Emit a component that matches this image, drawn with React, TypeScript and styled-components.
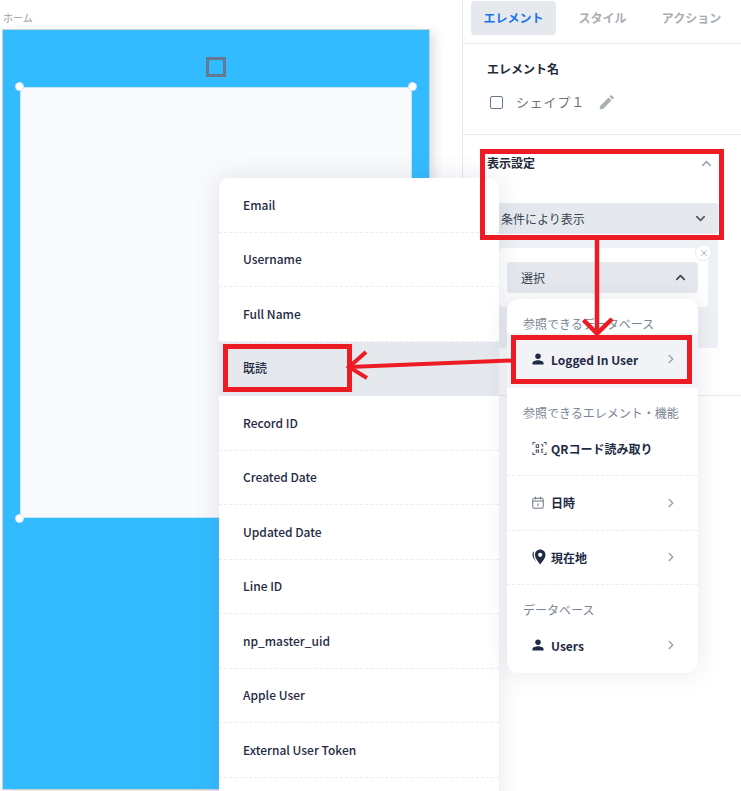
import * as React from "react";
import styled, { createGlobalStyle } from "styled-components";
import { ChevronDown, ChevronRight, ChevronUp, X } from "lucide-react";

const GlobalStyle = createGlobalStyle`
  *, *::before, *::after {
    box-sizing: border-box;
  }
  html, body {
    margin: 0;
    padding: 0;
    background: #fff;
  }
  body {
    font-family: "Noto Sans CJK JP", "Noto Sans", sans-serif;
    color: #1f2a44;
  }
`;

const fieldNames = [
  "Email",
  "Username",
  "Full Name",
  "既読",
  "Record ID",
  "Created Date",
  "Updated Date",
  "Line ID",
  "np_master_uid",
  "Apple User",
  "External User Token",
  "",
];

const UserIcon = () => (
  <svg width="12" height="12" viewBox="0 0 14 14" fill="#1f2a44">
    <circle cx="7" cy="3.8" r="3.2" />
    <path d="M0.500 13.500v-1.900C0.500 9.600 4.400 8.400 7 8.400s6.500 1.200 6.500 3.200v1.900z" />
  </svg>
);

const QrIcon = () => (
  <svg width="15" height="15" viewBox="0 0 16 16" fill="none" stroke="#4b5563" strokeWidth="1.1">
    <path d="M1 4V1.500h2.500M12.500 1.500H15V4M15 12v2.500h-2.500M3.500 14.500H1V12" />
    <path d="M4.500 4h2.500v3H4.500zM9.500 4h2v2M11.500 8v1M4.500 9.500h2.500v2.500H4.500zM9.500 9h1v3h1.500" />
  </svg>
);

const CalendarIcon = () => (
  <svg width="12" height="13" viewBox="0 0 12 13" fill="none" stroke="#6b7280" strokeWidth="1">
    <rect x="0.800" y="2.300" width="10.400" height="9.900" rx="0.800" />
    <path d="M0.800 5h10.400M3.500 0.800v2.500M8.500 0.800v2.500M6 7.500v2.700" />
  </svg>
);

const PinIcon = () => (
  <svg width="14" height="16" viewBox="0 0 14 16" fill="#1f2a44">
    <path
      fillRule="evenodd"
      d="M8.200 0.500c2.900 0 5.300 2.300 5.300 5.200 0 3.400-3.600 7.400-5.300 9.800-1.700-2.400-5.200-6.400-5.200-9.800 0-2.900 2.300-5.200 5.200-5.200zM8.200 3.700a2.100 2.100 0 1 0 0 4.200 2.100 2.100 0 0 0 0-4.200z"
    />
    <path d="M2.300 1.900C0.900 3.100 0.200 4.800 0.500 6.600c0.400 2.200 2.200 4.500 3.700 6.300-1.300-2.500-2.500-4.800-2.500-7.100 0-1.500 0.200-2.800 0.600-3.900z" />
  </svg>
);

const PencilIcon = () => (
  <svg width="15" height="15" viewBox="0 0 15 15" fill="#a9b1b8">
    <path d="M0.500 14.500l0.800-3.800 8.200-8.200 3 3-8.200 8.200z" />
    <path d="M10.400 1.600l1.100-1.100c0.400-0.400 1-0.400 1.400 0l1.600 1.600c0.400 0.400 0.400 1 0 1.400l-1.100 1.100z" />
  </svg>
);

const Annotations = () => (
  <MarkupLayer width="741" height="791" viewBox="0 0 741 791" fill="none" stroke="#ed1c24">
    <rect x="482.500" y="151.500" width="239" height="86" strokeWidth="5" />
    <path d="M597 238V332" strokeWidth="4.500" />
    <path d="M583.500 320L597 333.500L612 319" strokeWidth="4.500" />
    <rect x="513.500" y="337.500" width="176" height="44" strokeWidth="5" />
    <path d="M513 360.500L349 367" strokeWidth="4" />
    <path d="M366 352L349 367L367 378" strokeWidth="4" />
    <rect x="225.500" y="346.500" width="124" height="43" strokeWidth="5" />
  </MarkupLayer>
);

export default function App() {
  return (
    <Page>
      <GlobalStyle />
      <Canvas>
        <ScreenLabel>ホーム</ScreenLabel>
        <Phone>
          <HeaderShape />
          <Shape>
            <Handle $x="left" $y="top" />
            <Handle $x="right" $y="top" />
            <Handle $x="left" $y="bottom" />
          </Shape>
        </Phone>
      </Canvas>

      <Panel>
        <Tabs>
          <Tab $active>エレメント</Tab>
          <Tab>スタイル</Tab>
          <Tab>アクション</Tab>
        </Tabs>

        <NameSection>
          <SectionTitle>エレメント名</SectionTitle>
          <NameRow>
            <NameBox />
            <NameText>シェイプ１</NameText>
            <PencilIcon />
          </NameRow>
        </NameSection>

        <DisplaySection>
          <DisplayHeader>
            <SectionTitle>表示設定</SectionTitle>
            <ChevronUp size={15} color="#9ca3af" strokeWidth={2.5} />
          </DisplayHeader>
          <SelectBar $wide>
            <span>条件により表示</span>
            <ChevronDown size={15} color="#4b5563" strokeWidth={2.5} />
          </SelectBar>
          <ConditionWell>
            <ConditionCard>
              <CloseButton>
                <X size={10} color="#9ca3af" />
              </CloseButton>
              <SelectBar>
                <span>選択</span>
                <ChevronUp size={15} color="#374151" strokeWidth={2.5} />
              </SelectBar>
            </ConditionCard>
          </ConditionWell>
        </DisplaySection>
      </Panel>

      <FieldMenu>
        {fieldNames.map((name, index) => (
          <FieldRow key={index} $selected={name === "既読"}>
            {name}
          </FieldRow>
        ))}
      </FieldMenu>

      <SourceMenu>
        <MenuLabel>参照できるデータベース</MenuLabel>
        <SourceRow $active $latin>
          <IconSlot><UserIcon /></IconSlot>
          <SourceName>Logged In User</SourceName>
          <ChevronRight size={14} color="#9ca3af" strokeWidth={2.5} />
        </SourceRow>
        <MenuLabel>参照できるエレメント・機能</MenuLabel>
        <SourceRow $dashed>
          <IconSlot><QrIcon /></IconSlot>
          <SourceName>QRコード読み取り</SourceName>
        </SourceRow>
        <SourceRow $dashed>
          <IconSlot><CalendarIcon /></IconSlot>
          <SourceName>日時</SourceName>
          <ChevronRight size={14} color="#9ca3af" strokeWidth={2.5} />
        </SourceRow>
        <SourceRow $dashed>
          <IconSlot><PinIcon /></IconSlot>
          <SourceName>現在地</SourceName>
          <ChevronRight size={14} color="#9ca3af" strokeWidth={2.5} />
        </SourceRow>
        <MenuLabel>データベース</MenuLabel>
        <SourceRow $latin>
          <IconSlot><UserIcon /></IconSlot>
          <SourceName>Users</SourceName>
          <ChevronRight size={14} color="#9ca3af" strokeWidth={2.5} />
        </SourceRow>
      </SourceMenu>

      <Annotations />
    </Page>
  );
}

const Page = styled.div`
  position: relative;
  display: grid;
  grid-template-columns: 462px 1fr;
  width: 741px;
  height: 791px;
  overflow: hidden;
`;

const Canvas = styled.section`
  display: flex;
  flex-direction: column;
  padding-left: 2px;
`;

const ScreenLabel = styled.div`
  height: 29px;
  padding: 11px 0 0 1px;
  font-size: 10px;
  line-height: 14px;
  color: #9a9ea6;
`;

const Phone = styled.div`
  display: flex;
  flex-direction: column;
  align-items: center;
  width: 428px;
  height: 761px;
  padding-top: 27px;
  background: #33bbff;
  border: 1px solid #c9d3da;
  box-shadow: 4px 4px 10px rgba(60, 70, 90, 0.18);
`;

const HeaderShape = styled.div`
  width: 20px;
  height: 20px;
  border: 3px solid #67788f;
  flex: none;
`;

const Shape = styled.div`
  position: relative;
  width: 392px;
  height: 431px;
  margin-top: 10px;
  background: #f9fafc;
  border: 1px solid #c5e6f5;
  border-radius: 4px;
`;

const Handle = styled.span<{ $x: "left" | "right"; $y: "top" | "bottom" }>`
  position: absolute;
  ${(p) => p.$x}: -6px;
  ${(p) => p.$y}: -6px;
  width: 9px;
  height: 9px;
  border-radius: 50%;
  background: #fff;
  border: 1px solid #d8e6ee;
`;

const Panel = styled.aside`
  display: flex;
  flex-direction: column;
  border-left: 1px solid #e5e9ee;
`;

const Tabs = styled.div`
  display: flex;
  align-items: flex-start;
  gap: 4px;
  height: 44px;
  padding: 1px 0 0 8px;
  border-bottom: 1px solid #e5e9ee;
`;

const Tab = styled.div<{ $active?: boolean }>`
  width: 85px;
  height: 34px;
  padding-bottom: 1px;
  display: flex;
  align-items: center;
  justify-content: center;
  border-radius: 4px;
  font-size: 12px;
  font-weight: 700;
  background: ${(p) => (p.$active ? "#e5e9ee" : "transparent")};
  color: ${(p) => (p.$active ? "#1a73e8" : "#a8adb3")};
`;

const NameSection = styled.div`
  height: 91px;
  padding: 16px 0 0 24px;
  border-bottom: 1px solid #e5e9ee;
`;

const SectionTitle = styled.div`
  font-size: 12px;
  line-height: 18px;
  font-weight: 700;
  color: #1f2937;
`;

const NameRow = styled.div`
  display: flex;
  align-items: center;
  margin-top: 15px;
  padding-left: 3px;
`;

const NameBox = styled.span`
  width: 13px;
  height: 13px;
  border: 1.5px solid #67788f;
  border-radius: 2px;
  margin-right: 13px;
`;

const NameText = styled.span`
  width: 83px;
  font-size: 13px;
  letter-spacing: 0.8px;
  line-height: 18px;
  color: #6b7280;
`;

const DisplaySection = styled.div`
  display: flex;
  flex-direction: column;
  height: 261px;
  padding: 19px 23px 0 24px;
  border-bottom: 1px solid #e5e9ee;
`;

const DisplayHeader = styled.div`
  display: flex;
  align-items: center;
  justify-content: space-between;
  padding-right: 4px;
  height: 18px;
`;

const SelectBar = styled.div<{ $wide?: boolean }>`
  display: flex;
  align-items: center;
  justify-content: space-between;
  height: 31px;
  padding: 0 10px 0 14px;
  margin-top: ${(p) => (p.$wide ? "31px" : "0")};
  border-radius: 4px;
  background: #e5e9ee;
  font-size: 12px;
  color: #374151;
`;

const ConditionWell = styled.div`
  margin: 2px 0 0 12px;
  height: 112px;
  padding: 12px 10px 0 0;
  background: #eef1f5;
  border-radius: 0 0 4px 4px;
`;

const ConditionCard = styled.div`
  position: relative;
  height: 59px;
  padding: 14px 10px 0 8px;
  background: #fff;
  border-radius: 4px;
`;

const CloseButton = styled.span`
  position: absolute;
  top: -4px;
  right: -4px;
  display: flex;
  align-items: center;
  justify-content: center;
  width: 17px;
  height: 17px;
  border-radius: 50%;
  background: #fff;
  border: 1px solid #e5e9ee;
`;

const FieldMenu = styled.div`
  position: absolute;
  left: 219px;
  top: 178px;
  width: 280px;
  background: #fff;
  border-radius: 10px;
  box-shadow: 0 0 24px rgba(90, 100, 130, 0.16);
`;

const FieldRow = styled.div<{ $selected?: boolean }>`
  display: flex;
  align-items: center;
  height: 54.5px;
  padding: 0 0 1px 24px;
  border-bottom: 1px dashed #e9ecf0;
  font-size: 12px;
  font-weight: 500;
  color: #1f2a44;
  background: ${(p) => (p.$selected ? "#e5e9ee" : "transparent")};
`;

const SourceMenu = styled.div`
  position: absolute;
  left: 507px;
  top: 299px;
  width: 191px;
  height: 374px;
  background: #fff;
  border-radius: 12px;
  box-shadow: 0 0 24px rgba(90, 100, 130, 0.14);
`;

const MenuLabel = styled.div`
  padding: 16px 16px 0;
  font-size: 12px;
  line-height: 18px;
  color: #7b8494;
`;

const SourceRow = styled.div<{ $active?: boolean; $dashed?: boolean; $latin?: boolean }>`
  display: flex;
  align-items: center;
  height: 54.5px;
  padding: 0 20px ${(p) => (p.$latin ? "2px" : "0")} 25px;
  background: ${(p) => (p.$active ? "#f1f3f7" : "transparent")};
  border-bottom: ${(p) => (p.$dashed ? "1px dashed #e9ecf0" : "0")};
`;

const IconSlot = styled.span`
  display: flex;
  align-items: center;
  width: 19px;
  flex: none;
`;

const SourceName = styled.span`
  flex: 1;
  font-size: 12px;
  font-weight: 600;
  color: #1f2a44;
`;

const MarkupLayer = styled.svg`
  position: absolute;
  left: 0;
  top: 0;
  pointer-events: none;
`;
